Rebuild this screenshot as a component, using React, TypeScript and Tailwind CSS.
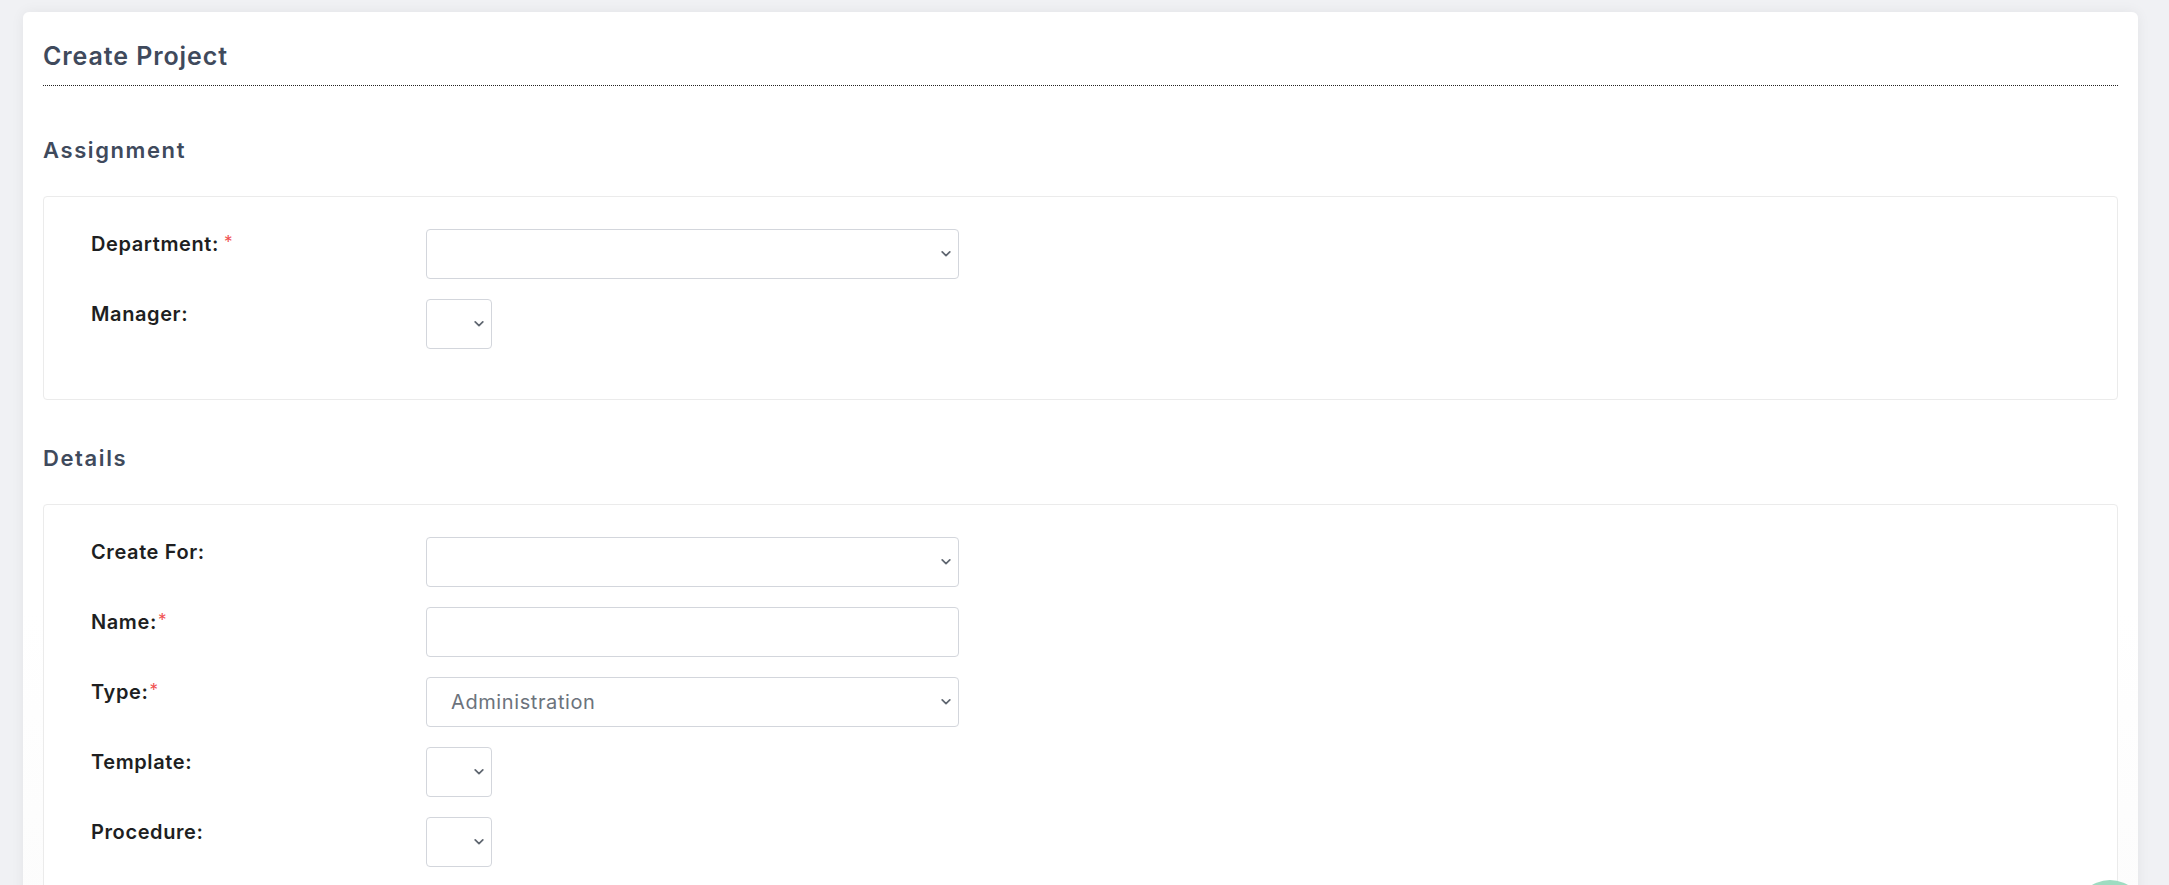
import React from "react";

const font = { fontFamily: "Inter, 'Open Sans', sans-serif" };

function Chevron() {
  return (
    <svg width="10" height="7" viewBox="0 0 10 7" className="pointer-events-none absolute right-[8px] top-1/2 -translate-y-1/2">
      <path d="M1.2 1.4l3.8 3.8 3.8-3.8" fill="none" stroke="#5f6670" strokeWidth="1.7" strokeLinecap="round" strokeLinejoin="round" />
    </svg>
  );
}

function SelectBox({ wide = false, value = "" }: { wide?: boolean; value?: string }) {
  return (
    <div className={`relative h-[50px] ${wide ? "w-[533px]" : "w-[66px]"}`}>
      <select
        defaultValue={value}
        className="h-full w-full appearance-none rounded-[4px] border border-[#d3d6dc] bg-white pl-[24px] pr-[30px] text-[20px] tracking-[0.6px] text-[#6c737c] outline-none"
      >
        <option value={value}>{value}</option>
      </select>
      <Chevron />
    </div>
  );
}

function Label({ text, required, spaced }: { text: string; required?: boolean; spaced?: boolean }) {
  return (
    <div className="w-[335px] shrink-0 pt-[3px] text-[20px] font-semibold leading-[24px] tracking-[0.6px] text-[#1e1f22]">
      {text}
      {required && (
        <span className={`relative -top-[2px] align-top text-[17px] font-normal text-[#f0504f] ${spaced ? "ml-[5px]" : "ml-[1px]"}`}>*</span>
      )}
    </div>
  );
}

function Row({ children }: { children: React.ReactNode }) {
  return <div className="mb-[20px] flex items-start">{children}</div>;
}

function Section({ title, first, children }: { title: string; first?: boolean; children: React.ReactNode }) {
  return (
    <>
      <h2
        className={`${first ? "mt-[51px]" : "mt-[45px]"} mb-[33px] text-[22px] font-semibold leading-[26px] tracking-[1.6px] text-[#3f4a5c]`}
      >
        {title}
      </h2>
      <div className="rounded-[4px] border border-[#ebebeb] bg-white pb-[30px] pl-[47px] pt-[32px]">{children}</div>
    </>
  );
}

export default function App() {
  return (
    <div className="relative h-[885px] overflow-hidden bg-[#f0f1f4] pl-[23px] pr-[31px] pt-[12px]" style={font}>
      <div className="min-h-[1200px] rounded-[6px] bg-gradient-to-b from-white via-white to-[#f9f9f9] px-[20px] pt-[29px] shadow-[0_0_14px_rgba(0,0,0,0.06)]">
        <div className="border-b border-dotted border-[#222] pb-[14px]">
          <h1 className="text-[25px] font-semibold leading-[30px] tracking-[0.9px] text-[#3f4a5c]">Create Project</h1>
        </div>

        <Section title="Assignment" first>
          <Row>
            <Label text="Department:" required spaced />
            <SelectBox wide />
          </Row>
          <Row>
            <Label text="Manager:" />
            <SelectBox />
          </Row>
        </Section>

        <Section title="Details">
          <Row>
            <Label text="Create For:" />
            <SelectBox wide />
          </Row>
          <Row>
            <Label text="Name:" required />
            <input className="h-[50px] w-[533px] rounded-[4px] border border-[#d3d6dc] bg-white px-[23px] text-[20px] outline-none" />
          </Row>
          <Row>
            <Label text="Type:" required />
            <SelectBox wide value="Administration" />
          </Row>
          <Row>
            <Label text="Template:" />
            <SelectBox />
          </Row>
          <Row>
            <Label text="Procedure:" />
            <SelectBox />
          </Row>
        </Section>
      </div>

      <div className="absolute left-[2075px] top-[880px] h-[70px] w-[70px] rounded-full bg-[#9edcc1]" />
    </div>
  );
}
